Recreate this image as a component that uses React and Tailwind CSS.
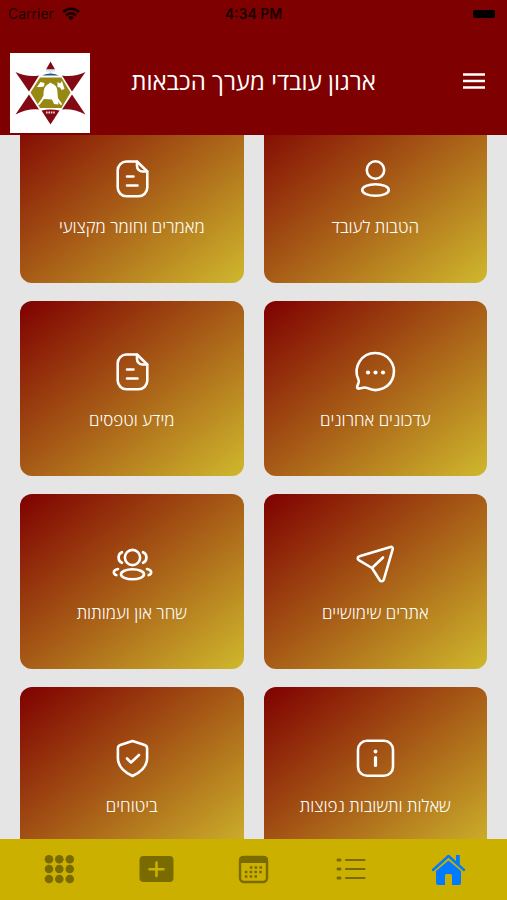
import React, { useLayoutEffect, useRef } from 'react';

const line = {
  viewBox: '0 0 48 48',
  fill: 'none',
  stroke: 'currentColor',
  strokeWidth: 2.6,
  strokeLinecap: 'round',
  strokeLinejoin: 'round',
  'aria-hidden': true,
  className: 'size-12',
};

function UserIcon() {
  return (
    <svg {...line}>
      <circle cx="24.5" cy="15" r="8.7" />
      <ellipse cx="24.5" cy="35" rx="13.3" ry="5.8" />
    </svg>
  );
}

function FileIcon() {
  return (
    <svg {...line}>
      <path d="M29 6.500H18.500a8.800 8.800 0 0 0-8.800 8.800V32.500a8.800 8.800 0 0 0 8.800 8.800h12a8.800 8.800 0 0 0 8.800-8.800V16.500z" />
      <path d="M29 6.800v4.200a5.500 5.500 0 0 0 5.500 5.500h4.500" />
      <path d="M19 21.500h6.500M19 30.500h10.500" />
    </svg>
  );
}

function ChatIcon() {
  return (
    <svg {...line}>
      <path d="M24.500 5a18.500 18.500 0 1 1-8 35.200c-1.500-.7-2.500-.9-4.200-.5l-4 .9c-1.500.3-2.500-.6-2.100-2.100l1.500-4.400c.3-1 .1-1.700-.3-2.700A18.500 18.500 0 0 1 24.500 5z" />
      <g fill="currentColor" stroke="none">
        <circle cx="17" cy="24.500" r="2.100" />
        <circle cx="24.500" cy="24.500" r="2.100" />
        <circle cx="32" cy="24.500" r="2.100" />
      </g>
    </svg>
  );
}

function SendIcon() {
  return (
    <svg {...line}>
      <path d="M39.500 6 8.500 15.300c-2 .6-2.400 2.800-.7 3.900L21 27l7.800 12.200c1.100 1.700 3.400 1.400 4-.5l8.900-30.500c.4-1.500-.7-2.600-2.200-2.200z" />
      <path d="M21 27 32 16.500" />
    </svg>
  );
}

function GroupIcon() {
  return (
    <svg {...line}>
      <circle cx="24.500" cy="16.500" r="7.600" />
      <ellipse cx="24.500" cy="33.300" rx="11.500" ry="5" />
      <path d="M14 11.200a5.800 5.800 0 0 0 0 10.600M35 11.200a5.800 5.800 0 0 1 0 10.600" />
      <path d="M10 28c-2.400.5-4.200 1.700-4.200 3.200 0 1.300 1 2.300 2.600 2.900M39 28c2.400.5 4.200 1.700 4.200 3.200 0 1.300-1 2.300-2.600 2.900" />
    </svg>
  );
}

function InfoIcon() {
  return (
    <svg {...line}>
      <rect x="7" y="6.800" width="35" height="35" rx="9" />
      <path d="M24.500 23.500v8" strokeWidth="3.200" />
      <circle cx="24.500" cy="17.500" r="1.900" fill="currentColor" stroke="none" />
    </svg>
  );
}

function ShieldIcon() {
  return (
    <svg {...line}>
      <path d="M24.500 7 12.300 11a3.500 3.500 0 0 0-2.400 3.300V24c0 8.500 6.500 14.300 14.600 18 8.100-3.700 14.600-9.500 14.600-18v-9.700a3.500 3.500 0 0 0-2.400-3.300z" />
      <path d="m19 24.500 4 4 8-7.500" />
    </svg>
  );
}

const tiles = [
  { label: 'הטבות לעובד', icon: UserIcon },
  { label: 'מאמרים וחומר מקצועי', icon: FileIcon },
  { label: 'עדכונים אחרונים', icon: ChatIcon },
  { label: 'מידע וטפסים', icon: FileIcon },
  { label: 'אתרים שימושיים', icon: SendIcon },
  { label: 'שחר און ועמותות', icon: GroupIcon },
  { label: 'שאלות ותשובות נפוצות', icon: InfoIcon },
  { label: 'ביטוחים', icon: ShieldIcon },
];

function HomeIcon() {
  return (
    <svg viewBox="0 0 36 36" fill="currentColor" className="size-9" aria-hidden>
      <path d="M18.500 9.500 31 20v11.500a2.500 2.500 0 0 1-2.500 2.500H22V24.500a1.500 1.500 0 0 0-1.500-1.500h-4a1.500 1.500 0 0 0-1.500 1.500V34H8.500A2.500 2.500 0 0 1 6 31.500V20z" />
      <path d="M2 19.500 18.500 5 35 19.500" fill="none" stroke="#ccb000" strokeWidth="5" />
      <path d="M3 19 18.500 5 34 19" fill="none" stroke="currentColor" strokeWidth="2.400" strokeLinecap="round" strokeLinejoin="round" />
      <path d="M26 4h3.800v11L26 11.500z" />
    </svg>
  );
}

function ListIcon() {
  return (
    <svg viewBox="0 0 36 36" fill="none" stroke="currentColor" strokeLinecap="round" className="size-9" aria-hidden>
      <path d="M13 9h18.500M13 18h18.500M13 27h18.500" strokeWidth="2.200" />
      <path d="M5 9h2M5 18h2M5 27h2" strokeWidth="3" />
    </svg>
  );
}

function CalendarIcon() {
  return (
    <svg viewBox="0 0 36 36" className="size-9" aria-hidden>
      <rect x="5" y="6" width="27" height="25" rx="4" fill="none" stroke="currentColor" strokeWidth="2.400" />
      <path d="M4 12V9a4 4 0 0 1 4-4h21a4 4 0 0 1 4 4v3z" fill="currentColor" />
      <path
        d="M14.800 16.500h12.200M9.800 21h17.200M9.800 25.500h12.200"
        fill="none"
        stroke="currentColor"
        strokeWidth="2.600"
        strokeDasharray="2.600 2.200"
      />
    </svg>
  );
}

function AddIcon() {
  return (
    <svg viewBox="0 0 36 36" className="size-9" aria-hidden>
      <rect x="1.500" y="5" width="34" height="26" rx="4" fill="currentColor" />
      <path d="M18.500 11.500v13.500M11.500 18.200h14" stroke="#ccb000" strokeWidth="2.600" strokeLinecap="round" />
    </svg>
  );
}

function GridIcon() {
  return (
    <svg viewBox="0 0 36 36" fill="currentColor" className="size-9" aria-hidden>
      {[8.3, 18, 28].map((y) => [8, 18.300, 28.800].map((x) => <circle key={`${x}-${y}`} cx={x} cy={y} r="4.300" />))}
    </svg>
  );
}

const tabs = [
  { name: 'בית', icon: HomeIcon, active: true },
  { name: 'רשימה', icon: ListIcon },
  { name: 'יומן', icon: CalendarIcon },
  { name: 'הוספה', icon: AddIcon },
  { name: 'תפריט', icon: GridIcon },
];

function Logo() {
  return (
    <svg viewBox="0 0 80 80" className="size-20 bg-white" role="img" aria-label="לוגו הארגון">
      <g fill="#830a14">
        <path d="M40.500 8.500 45 16.500H36z" />
        <path d="M5.500 19Q17 24.500 29 22.500L19 38.500z" />
        <path d="M75.500 19Q64 24.500 52 22.500L62 38.500z" />
        <path d="M5.500 61.500Q17 55.500 29 56.500L19 41.500z" />
        <path d="M75.500 61.500Q64 55.500 52 56.500L62 41.500z" />
        <path d="M31.500 57.500Q40.500 55.500 49.500 57.500L40.500 71.500z" />
      </g>
      <path d="M36 17.500h9M40.500 17v4" stroke="#cfe4f5" strokeWidth="1.800" />
      <path d="M32 22.500Q40.500 18.500 49 22.500z" fill="#2f5288" />
      <path d="M30 24.500h21.500L60.500 39.500 51.500 55H30L20.500 39.500z" fill="#978813" />
      <path
        d="M33.500 42.500c0-6 1-9.500 5-11.500l1.500-1.500 3 1.500c3.500 1.500 4.500 5 4.500 9l1 11.500-4.500-.5-2-4.500-7.500-.5-2.500-1z"
        fill="#fff"
      />
      <path d="m27 34 3.500-5 4 1-.5 3.500-3 .5z" fill="#fff" />
      <path d="M47.500 34v-5l2.500 1.500 2-2.500 2.500 8-3 1-1.500-2.500z" fill="#fff" />
      <path d="m29 51 6-8M51 51 46 44" stroke="#fff" strokeWidth="2" strokeLinecap="round" />
      <path d="M36 59.500h9.500" stroke="#f3d4d4" strokeWidth="2" strokeDasharray="1.600 .8" />
    </svg>
  );
}

function StatusBar() {
  return (
    <div dir="ltr" className="grid grid-cols-3 items-center px-2 pt-1 font-['Inter',sans-serif] text-sm text-black/80">
      <div className="flex items-center gap-2">
        <span>Carrier</span>
        <svg viewBox="0 0 18 14" className="h-3.5 w-[18px]" fill="none" stroke="currentColor" strokeWidth="2.600" aria-hidden>
          <path d="M1 5a11.500 11.500 0 0 1 16 0M4 8.500a7 7 0 0 1 10 0" />
          <path d="m9 13.500-3-3a4.300 4.300 0 0 1 6 0z" fill="currentColor" stroke="none" />
        </svg>
      </div>
      <span className="text-center font-semibold">4:34 PM</span>
      <span className="mr-1 h-2 w-[22px] justify-self-end rounded-xs bg-black" />
    </div>
  );
}

export default function App() {
  const scroller = useRef(null);

  // start slightly below the top of the list
  useLayoutEffect(() => {
    scroller.current.scrollTop = 46;
  }, []);

  return (
    <div dir="rtl" className="flex h-screen flex-col bg-[#e5e5e5] font-['Open_Sans','Noto_Sans',sans-serif]">
      <header className="shrink-0 bg-[#7f0000] text-white">
        <StatusBar />
        <div className="mt-[29px] flex items-center justify-between px-2.5 pb-0.5">
          <button type="button" aria-label="פתיחת תפריט" className="flex w-20 pr-3 pb-6">
            <svg viewBox="0 0 22 16" className="h-4 w-[22px]" stroke="currentColor" strokeWidth="2.600" aria-hidden>
              <path d="M0 1.500h22M0 8h22M0 14.500h22" />
            </svg>
          </button>
          <h1 className="pb-6 text-2xl font-normal">ארגון עובדי מערך הכבאות</h1>
          <Logo />
        </div>
      </header>

      <main ref={scroller} className="min-h-0 flex-1 overflow-y-auto [scrollbar-width:none]">
        <div className="grid grid-cols-2 gap-x-5 gap-y-[18px] px-5 pt-[19px] pb-5">
          {tiles.map(({ label, icon: Icon }) => (
            <button
              key={label}
              type="button"
              className="flex h-[175px] flex-col items-center justify-center gap-3 rounded-xl bg-linear-to-br/srgb from-[#7f0000] to-[#cfb82d] pt-0.5 text-white"
            >
              <Icon />
              <span className="text-[17px] leading-6 font-light">{label}</span>
            </button>
          ))}
        </div>
      </main>

      <nav className="flex shrink-0 bg-[#ccb000] px-2.5 pt-3 pb-[13px]">
        {tabs.map(({ name, icon: Icon, active }) => (
          <button
            key={name}
            type="button"
            aria-label={name}
            className={`flex flex-1 justify-center ${active ? 'text-[#007aff]' : 'text-[#7a6b00]'}`}
          >
            <Icon />
          </button>
        ))}
      </nav>
    </div>
  );
}
